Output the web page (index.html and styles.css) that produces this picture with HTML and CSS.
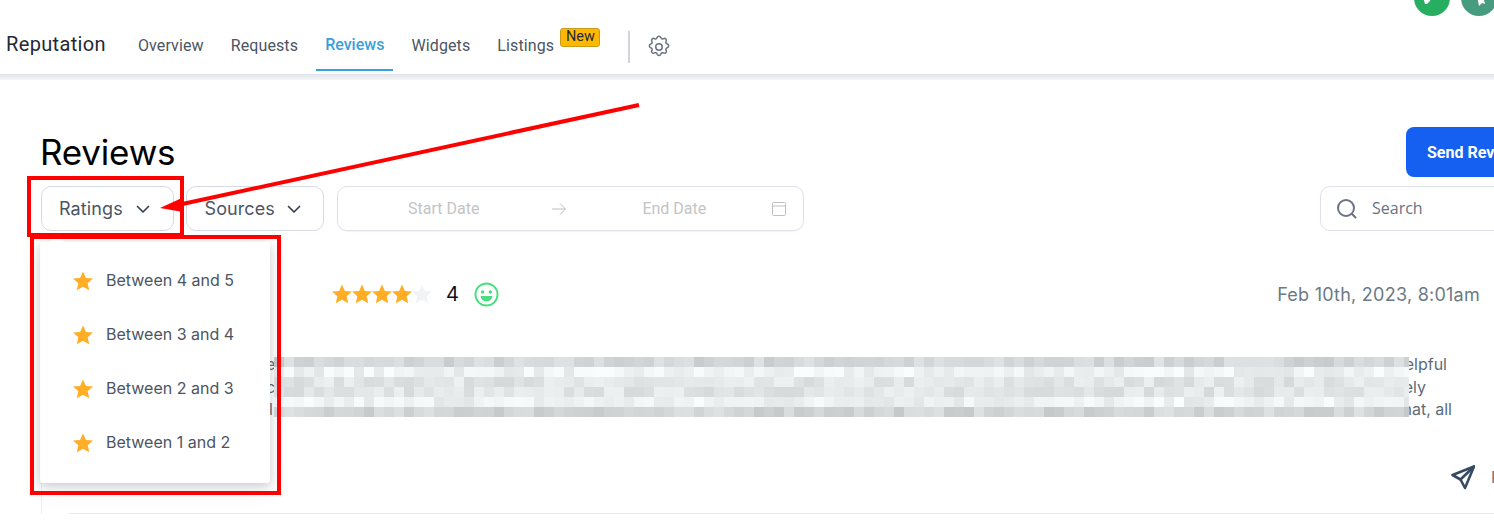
FILE: index.html
```html
<!DOCTYPE html>
<html lang="en">
<head>
<meta charset="utf-8">
<title>Reputation - Reviews</title>
<link rel="stylesheet" href="styles.css">
</head>
<body>
<div class="page">
  <div class="avatars">
    <span class="avatar avatar-a"><svg viewBox="0 0 36 36" width="36" height="36"><path d="M9 17h8l-1 4-3 3h-2z" fill="#fff"/></svg></span>
    <span class="avatar avatar-b"><svg viewBox="0 0 36 36" width="36" height="36"><path d="M16 17h9l-2 3 1 4-3-1-3 3-1-5z" fill="#fff"/></svg></span>
  </div>
  <header class="topbar">
    <div class="brand">Reputation</div>
    <nav class="nav">
      <a class="nav-item">Overview</a>
      <a class="nav-item">Requests</a>
      <a class="nav-item active">Reviews</a>
      <a class="nav-item">Widgets</a>
      <a class="nav-item">Listings<span class="badge">New</span></a>
    </nav>
    <span class="divider"></span>
    <svg class="gear" viewBox="0 0 24 24" width="26" height="26" fill="none" stroke="#6b7280" stroke-width="1.400" stroke-linecap="round" stroke-linejoin="round"><path d="M10.3 3.2c.4-1.600 2.900-1.600 3.400 0a1.700 1.700 0 0 0 2.600 1.100c1.500-.9 3.200.8 2.300 2.300a1.700 1.700 0 0 0 1.100 2.600c1.600.4 1.600 2.900 0 3.400a1.700 1.700 0 0 0-1.100 2.600c.9 1.500-.8 3.200-2.300 2.300a1.700 1.700 0 0 0-2.600 1.100c-.4 1.600-2.900 1.600-3.400 0a1.700 1.700 0 0 0-2.600-1.100c-1.500.9-3.200-.8-2.300-2.300a1.700 1.700 0 0 0-1.100-2.600c-1.600-.4-1.600-2.900 0-3.400a1.700 1.700 0 0 0 1.100-2.600c-.9-1.500.8-3.200 2.300-2.300a1.700 1.700 0 0 0 2.600-1.100z"/><circle cx="12" cy="12" r="3"/></svg>
  </header>
  <div class="topbar-shade"></div>

  <main class="content">
    <div class="title-row">
      <h1 class="title">Reviews</h1>
      <button class="send-btn">Send Review Request</button>
    </div>
    <div class="filters">
      <button class="select select-ratings">Ratings<svg class="chev" viewBox="0 0 16 16" width="16" height="16" fill="none" stroke="#374151" stroke-width="1.7" stroke-linecap="round" stroke-linejoin="round"><path d="M2.500 5.500L8 11l5.500-5.500"/></svg></button>
      <button class="select select-sources">Sources<svg class="chev" viewBox="0 0 16 16" width="16" height="16" fill="none" stroke="#374151" stroke-width="1.7" stroke-linecap="round" stroke-linejoin="round"><path d="M2.500 5.500L8 11l5.500-5.500"/></svg></button>
      <div class="daterange">
        <span class="date-text date-start">Start Date</span>
        <svg class="date-arrow" viewBox="0 0 16 16" width="16" height="16" fill="none" stroke="#bfbfbf" stroke-width="1"><path d="M1 8h13.500M9 2.500L14.500 8 9 13.500"/></svg>
        <span class="date-text date-end">End Date</span>
        <svg class="date-cal" viewBox="0 0 16 16" width="16" height="16" fill="none" stroke="#bfbfbf" stroke-width="1"><rect x="1.500" y="1.500" width="13" height="13" rx="1"/><path d="M1.500 5h13"/></svg>
      </div>
      <div class="search">
        <svg viewBox="0 0 24 24" width="24" height="24" fill="none" stroke="#6b7280" stroke-width="2" stroke-linecap="round"><circle cx="11" cy="11" r="8"/><path d="M20.500 20.500L17 17"/></svg>
        <span class="search-text">Search</span>
      </div>
    </div>

    <section class="review">
      <div class="review-head">
        <div class="stars">
          <svg class="star on" viewBox="0 0 24 24"><path d="M12 1.500l3.200 7.100 7.700.8-5.800 5.100 1.700 7.600L12 18.200l-6.800 3.900 1.700-7.600L1.100 9.400l7.700-.8z"/></svg>
          <svg class="star on" viewBox="0 0 24 24"><path d="M12 1.500l3.200 7.100 7.700.8-5.800 5.100 1.700 7.600L12 18.200l-6.800 3.900 1.700-7.600L1.100 9.400l7.700-.8z"/></svg>
          <svg class="star on" viewBox="0 0 24 24"><path d="M12 1.500l3.200 7.100 7.700.8-5.800 5.100 1.700 7.600L12 18.200l-6.800 3.900 1.700-7.600L1.100 9.400l7.700-.8z"/></svg>
          <svg class="star on" viewBox="0 0 24 24"><path d="M12 1.500l3.200 7.100 7.700.8-5.800 5.100 1.700 7.600L12 18.200l-6.800 3.900 1.700-7.600L1.100 9.400l7.700-.8z"/></svg>
          <svg class="star off" viewBox="0 0 24 24"><path d="M12 1.500l3.200 7.100 7.700.8-5.800 5.100 1.700 7.600L12 18.200l-6.800 3.900 1.700-7.600L1.100 9.400l7.700-.8z"/></svg>
        </div>
        <span class="score">4</span>
        <svg class="smile" viewBox="0 0 26 26" width="25" height="25"><circle cx="13" cy="13" r="11.500" fill="none" stroke="#4ade80" stroke-width="2"/><circle cx="9" cy="10.500" r="1.800" fill="#4ade80"/><circle cx="17" cy="10.500" r="1.800" fill="#4ade80"/><path d="M7 14.500h12c0 3.500-2.700 5.500-6 5.500s-6-2-6-5.500z" fill="#4ade80"/></svg>
        <span class="review-date">Feb 10th, 2023, 8:01am</span>
      </div>
      <div class="review-body">
        <p class="line line-1">e<span>elpful</span></p>
        <p class="line line-2">c<span>ely</span></p>
        <p class="line line-3">l<span>hat, all</span></p>
      </div>
      <div class="review-foot">
        <svg class="send-icon" viewBox="0 0 25 25" width="25" height="25" fill="none" stroke="#374a63" stroke-width="2.600" stroke-linejoin="round" stroke-linecap="round"><path d="M24 1.500L2.500 10l8 4.500 4.500 8.500z"/><path d="M24 1.500L10.500 14.500"/></svg>
        <span class="reply">Reply</span>
      </div>
    </section>
  </main>

  <div class="pixelate" id="pixelate"></div>

  <div class="dropdown">
    <span class="dropdown-caret"></span>
    <div class="option"><svg class="star on" viewBox="0 0 24 24"><path d="M12 1.500l3.200 7.100 7.700.8-5.800 5.100 1.700 7.600L12 18.200l-6.800 3.900 1.700-7.600L1.100 9.400l7.700-.8z"/></svg>Between 4 and 5</div>
    <div class="option"><svg class="star on" viewBox="0 0 24 24"><path d="M12 1.500l3.200 7.100 7.700.8-5.800 5.100 1.700 7.600L12 18.200l-6.800 3.900 1.700-7.600L1.100 9.400l7.700-.8z"/></svg>Between 3 and 4</div>
    <div class="option"><svg class="star on" viewBox="0 0 24 24"><path d="M12 1.500l3.200 7.100 7.700.8-5.800 5.100 1.700 7.600L12 18.200l-6.800 3.900 1.700-7.600L1.100 9.400l7.700-.8z"/></svg>Between 2 and 3</div>
    <div class="option"><svg class="star on" viewBox="0 0 24 24"><path d="M12 1.500l3.200 7.100 7.700.8-5.800 5.100 1.700 7.600L12 18.200l-6.800 3.900 1.700-7.600L1.100 9.400l7.700-.8z"/></svg>Between 1 and 2</div>
  </div>

  <span class="mark mark-ratings"></span>
  <span class="mark mark-dropdown"></span>
  <svg class="arrow" viewBox="0 0 1494 524" width="1494" height="524"><path d="M639 105L180 204.500" stroke="#f00" stroke-width="4" fill="none"/><path d="M160 208L183 197.500 183 212z" fill="#f00"/></svg>
</div>
<script src="pixelate.js"></script>
</body>
</html>
```
FILE: styles.css
```css
* { box-sizing: border-box; }
html, body { margin: 0; padding: 0; background: #fff; }
.page { position: relative; width: 1494px; height: 524px; overflow: hidden; font-family: Inter, "Liberation Sans", sans-serif; color: #4b5563; }

.avatars { position: absolute; top: -20px; left: 1414px; display: flex; gap: 11px; }
.avatar { width: 36px; height: 36px; border-radius: 50%; display: block; flex: none; }
.avatar-a { background: #27ae60; }
.avatar-b { background: #479b7e; }

.topbar { height: 74px; display: flex; align-items: stretch; padding-left: 6px; background: #fff; font-family: Roboto, "Liberation Sans", sans-serif; }
.topbar-shade { height: 6px; background: linear-gradient(#dfe3e8, #f5f6f8); }
.brand { font-size: 20px; font-weight: 400; color: #1f2937; letter-spacing: .35px; padding-top: 32px; width: 123px; flex: none; }
.nav { display: flex; height: 71px; }
.nav-item { position: relative; font-size: 16px; font-weight: 400; letter-spacing: .1px; color: #4b5563; padding: 36px 9px 0; margin-right: 9.100px; white-space: nowrap; }
.nav-item.active { font-weight: 500; letter-spacing: 0; color: #3b9fdc; border-bottom: 2px solid #3b9fdc; padding-top: 35px; }
.badge { position: absolute; left: 72px; top: 28px; width: 40px; height: 19px; background: #ffb800; border: 1px solid #c99a1c; border-radius: 3px; font-size: 14.500px; font-weight: 400; letter-spacing: 0; line-height: 16px; text-align: center; color: #1f2937; }
.divider { width: 2px; height: 32px; margin: 31px 16px 0 56px; background: #d1d5db; flex: none; }
.gear { margin-top: 34px; flex: none; }

.content { padding: 0 0 0 41px; }
.title-row { display: flex; justify-content: space-between; align-items: flex-start; height: 106px; padding-top: 48px; }
.title { margin: 0 0 0 -1px; font-family: Inter, sans-serif; font-size: 35px; font-weight: 400; line-height: 48px; color: #000; letter-spacing: -.2px; }
.send-btn { flex: none; width: 200px; height: 50px; margin-right: -112px; margin-top: -1px; padding: 0 0 0 21px; border: 0; border-radius: 8px; background: #1560f0; color: #fff; text-align: left; white-space: nowrap; font-family: Roboto, sans-serif; font-size: 16px; font-weight: 700; }

.filters { display: flex; align-items: center; height: 45px; }
.select { display: flex; align-items: center; justify-content: space-between; height: 45px; padding: 0 22px 0 17px; margin-right: 12px; background: #fff; border: 1px solid #d7dae4; border-radius: 10px; font-family: Inter, sans-serif; font-size: 18px; letter-spacing: .1px; color: #4b5563; flex: none; }
.select-ratings { width: 133px; }
.select-sources { width: 138px; padding: 0 21px 0 17.500px; }
.chev { flex: none; }
.daterange { display: flex; align-items: center; width: 467px; height: 45px; margin-left: 1px; border: 1px solid #dfe1e9; border-radius: 10px; flex: none; font-family: Roboto, sans-serif; box-shadow: 0 1px 1px rgba(200, 205, 215, .2); }
.date-text { font-size: 16px; color: #c4c4c4; flex: none; }
.date-start { margin-left: 70px; }
.date-arrow { margin-left: 72px; }
.date-end { margin-left: 75px; }
.date-cal { margin-left: 65px; }
.search { display: flex; align-items: center; gap: 13px; width: 300px; height: 45px; margin-left: 516px; padding: 0 0 2px 14px; border: 1px solid #dfe1e9; border-radius: 10px; flex: none; font-family: "Open Sans", Roboto, sans-serif; }
.search svg { margin-top: 2px; }
.search-text { font-size: 16px; color: #6b7280; }

.review { border-left: 1px solid #eceef1; }
.review-head { display: flex; align-items: center; height: 54px; margin-top: 36px; padding-left: 289px; }
.stars { display: flex; }
.star { width: 22px; height: 22px; display: block; flex: none; }
.star.on { fill: #ffae26; }
.star.off { fill: #f1f3f6; }
.stars .star { margin-right: -2px; }
.score { margin-left: 15px; font-size: 20px; color: #0b0f19; }
.smile { margin-left: 15px; margin-top: 1px; }
.review-date { margin-left: auto; margin-right: 14px; font-size: 18px; color: #6b7a86; letter-spacing: .25px; }
.review-body { height: 69px; margin-top: 32px; display: flex; flex-direction: column; }
.line { display: flex; justify-content: space-between; margin: 0; height: 22.500px; padding-left: 224px; font-size: 16px; line-height: 22.500px; color: #5d6b78; }
.line-1 { width: 1405px; }
.line-2 { width: 1384px; }
.line-3 { width: 1410px; padding-left: 227px; }
.review-foot { display: flex; align-items: center; gap: 16px; height: 40px; margin-top: 35px; padding-left: 1408px; width: 1460px; }
.send-icon { flex: none; }
.reply { font-size: 16px; color: #6b7280; white-space: nowrap; flex: none; }
.review::after { content: ""; display: block; width: 1425px; margin-left: 27px; margin-top: 16px; height: 1px; background: #e8eaed; }

.pixelate { position: absolute; left: 274px; top: 357px; width: 1135px; height: 60px; display: grid; grid-template-columns: repeat(114, 10px); grid-auto-rows: 10px; overflow: hidden; }

.dropdown { position: absolute; left: 40px; top: 242px; width: 230px; height: 241px; padding-top: 11px; background: #fff; border-radius: 3px; box-shadow: 0 3px 8px rgba(60, 70, 80, .2), 0 6px 22px rgba(60, 70, 80, .1); }
.dropdown-caret { position: absolute; left: 12px; top: -5px; width: 10px; height: 10px; background: #fff; transform: rotate(45deg); }
.option { display: flex; align-items: center; gap: 12px; height: 54px; padding-left: 32px; font-size: 16px; color: #4b5563; }
.option .star { margin-top: 2px; }

.mark { position: absolute; border: 4px solid #f00; pointer-events: none; }
.mark-ratings { left: 27px; top: 176px; width: 157px; height: 61px; }
.mark-dropdown { left: 30px; top: 235px; width: 251px; height: 260px; }
.arrow { position: absolute; left: 0; top: 0; pointer-events: none; }
```
FILE: pixelate.js
```js
(function () {
  var host = document.getElementById('pixelate');
  var base = [212, 239, 226, 226, 238, 210];
  var seed = 7;
  function rnd() { seed = (seed * 16807) % 2147483647; return seed / 2147483647; }
  var frag = document.createDocumentFragment();
  for (var r = 0; r < 6; r++) {
    for (var c = 0; c < 114; c++) {
      var v = Math.round(base[r] + (rnd() - 0.5) * 24);
      v = Math.min(250, v);
      var cell = document.createElement('span');
      cell.style.background = 'rgb(' + v + ',' + (v + 3) + ',' + (v + 4) + ')';
      frag.appendChild(cell);
    }
  }
  host.appendChild(frag);
})();
```
